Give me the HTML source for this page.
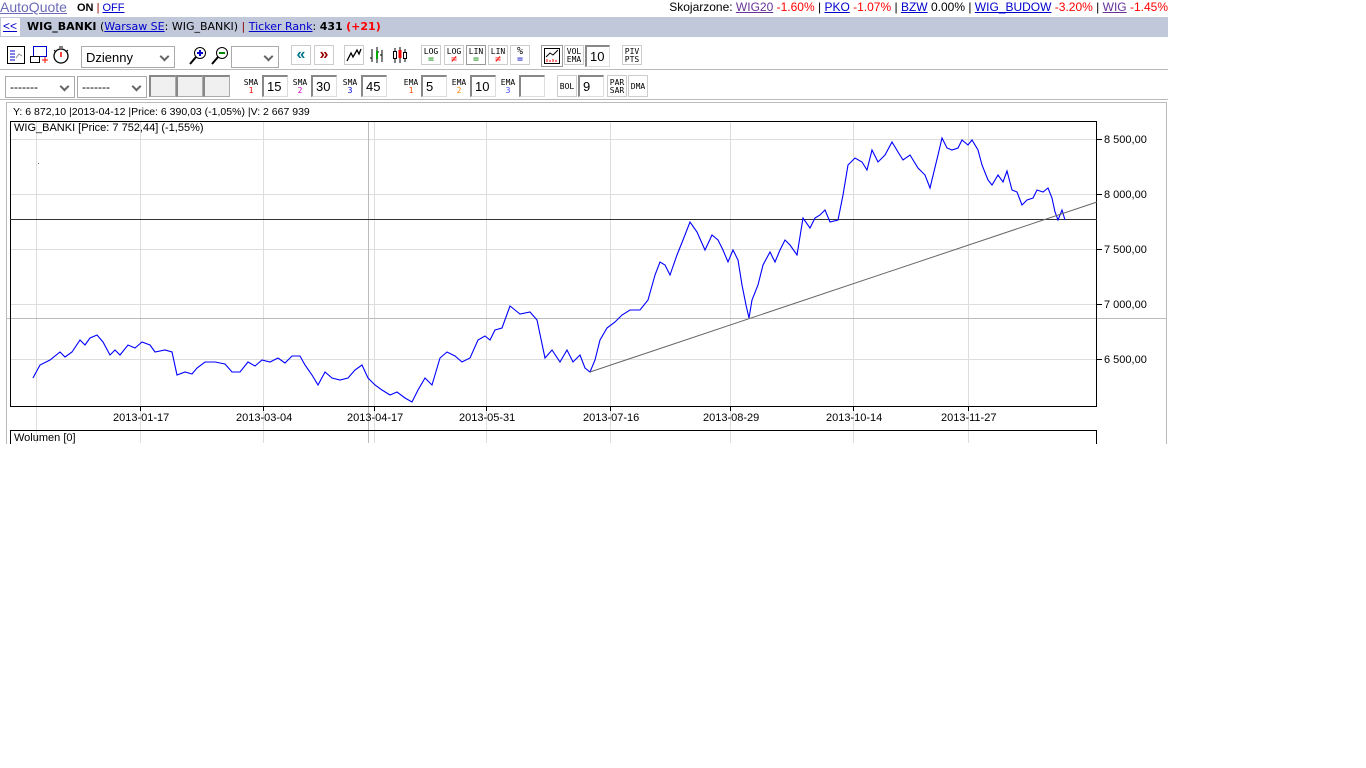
<!DOCTYPE html>
<html><head><meta charset="utf-8">
<style>
*{margin:0;padding:0;box-sizing:border-box}
body{width:1366px;height:768px;background:#fff;font-family:"Liberation Sans",Arial,sans-serif;position:relative;overflow:hidden}
.a{position:absolute}
a{color:#00c;text-decoration:underline}
.btn{position:absolute;border:1px solid #ccc;background:#fff;font-family:"DejaVu Sans Mono","Liberation Mono",monospace;font-size:8px;line-height:8px;text-align:center;color:#000}
.inp{position:absolute;border:1px solid #999;border-right-color:#ddd;border-bottom-color:#ddd;background:#fff;font-size:13px;padding:2px 0 0 3px;height:22px;border-top:2px solid #888;border-left:2px solid #888}
.sel{position:absolute;border:1px solid #aaa;background:#fff;height:22px;font-size:12px;padding:3px 4px}
.sel:after{content:"";position:absolute;right:6px;top:6px;width:5px;height:5px;border-right:2px solid #666;border-bottom:2px solid #666;transform:rotate(45deg)}
.gr{position:absolute;background:#f0f0f0;border:1px solid #aaa;border-top:2px solid #888;border-left:2px solid #888;height:22px;width:27px}
.ax{position:absolute;font-size:11px;color:#000}
</style></head><body>
<div class="a" style="left:0;top:-1px;font-size:14px;color:#6b6bb8;text-decoration:underline">AutoQuote</div>
<div class="a" style="left:77px;top:2px;font-size:11px;font-weight:bold">ON <span style="font-weight:normal;color:#800">|</span> <a style="font-weight:normal">OFF</a></div>
<div class="a" style="right:198px;top:0;font-size:12px;white-space:nowrap">Skojarzone: <a style="color:#639">WIG20</a> <span style="color:red">-1.60%</span> | <a>PKO</a> <span style="color:red">-1.07%</span> | <a>BZW</a> 0.00% | <a>WIG_BUDOW</a> <span style="color:red">-3.20%</span> | <a style="color:#639">WIG</a> <span style="color:red">-1.45%</span></div>
<div class="a" style="left:0;top:17px;width:1168px;height:20px;background:#c0c8da"></div>
<div class="a" style="left:1px;top:18px;width:19px;height:18px;background:#fff;font-size:12px;padding:1px 0 0 2px"><a>&lt;&lt;</a></div>
<div class="a" style="left:27px;top:20px;font-size:11px;font-family:'DejaVu Sans',sans-serif;white-space:nowrap"><b>WIG_BANKI</b> (<a>Warsaw SE</a>: WIG_BANKI) <span style="color:#800">|</span> <a>Ticker Rank</a>: <b>431</b> <b style="color:red">(+21)</b></div>

<svg class="a" style="left:7px;top:46px" width="18" height="18"><rect x=".5" y=".5" width="17" height="17" fill="#fff" stroke="#000"/><g stroke="#00c"><line x1="3" y1="5" x2="8" y2="5"/><line x1="3" y1="8" x2="8" y2="8"/><line x1="3" y1="11" x2="8" y2="11"/><line x1="3" y1="14" x2="8" y2="14"/></g><polyline points="9,12 12,8 15,10" fill="none" stroke="#888"/></svg>
<svg class="a" style="left:29px;top:45px" width="20" height="20"><rect x="4.5" y="1.5" width="13" height="10" fill="#fff" stroke="#00c"/><rect x="1.5" y="11.5" width="9" height="6" fill="#fff" stroke="#000"/><path d="M13 15h6M16 12v6" stroke="red"/></svg>
<svg class="a" style="left:51px;top:45px" width="20" height="20"><circle cx="10" cy="11" r="7" fill="#fff" stroke="#000" stroke-width="1.3"/><path d="M10 7v5" stroke="red" stroke-width="1.5"/><path d="M8 2h4M3 5l2 2M17 5l-2 2" stroke="#000"/></svg>
<div class="sel" style="left:81px;top:46px;width:94px;font-size:13px">Dzienny</div>
<svg class="a" style="left:188px;top:46px" width="20" height="20"><circle cx="12" cy="7" r="5.5" fill="#fff" stroke="#000"/><path d="M9 7h6M12 4v6" stroke="#00c" stroke-width="2"/><path d="M8 11l-6 7" stroke="#000" stroke-width="2"/></svg>
<svg class="a" style="left:210px;top:46px" width="20" height="20"><circle cx="12" cy="7" r="5.5" fill="#fff" stroke="#000"/><path d="M9 7h6" stroke="#080" stroke-width="2"/><path d="M8 11l-6 7" stroke="#000" stroke-width="2"/></svg>
<div class="sel" style="left:231px;top:46px;width:48px"></div>
<div class="a" style="left:291px;top:45px;width:20px;height:20px;border:1px solid #ccc;color:#078;font-weight:bold;font-size:16px;text-align:center;line-height:18px">«</div>
<div class="a" style="left:314px;top:45px;width:20px;height:20px;border:1px solid #ccc;color:#900;font-weight:bold;font-size:16px;text-align:center;line-height:18px">»</div>
<svg class="a" style="left:344px;top:45px" width="20" height="20"><rect x=".5" y=".5" width="19" height="19" fill="#fff" stroke="#ccc"/><polyline points="3,16 7,8 9,12 13,5 15,9 17,4" fill="none" stroke="#000" stroke-width="1.3"/></svg>
<svg class="a" style="left:367px;top:45px" width="20" height="20"><path d="M5 4v13M10 2v16M15 5v12M3 13h2M10 7h2M13 10h2" stroke="#000"/><rect x="9" y="6" width="2" height="8" fill="#0a0"/></svg>
<svg class="a" style="left:390px;top:45px" width="20" height="20"><path d="M5 3v15M10 2v16M15 4v13" stroke="#000"/><rect x="3.5" y="6.5" width="3" height="7" fill="#fff" stroke="#000"/><rect x="8.5" y="5" width="3" height="8" fill="red"/><rect x="13.5" y="7.5" width="3" height="6" fill="#fff" stroke="#000"/></svg>
<div class="btn" style="left:421px;top:45px;width:20px;height:20px;padding-top:2px">LOG<br><span style="color:#080;font-size:10px">=</span></div>
<div class="btn" style="left:444px;top:45px;width:20px;height:20px;padding-top:2px">LOG<br><span style="color:red;font-size:10px">≠</span></div>
<div class="btn" style="left:466px;top:45px;width:20px;height:20px;padding-top:2px;border-color:#999">LIN<br><span style="color:#080;font-size:10px">=</span></div>
<div class="btn" style="left:488px;top:45px;width:20px;height:20px;padding-top:2px">LIN<br><span style="color:red;font-size:10px">≠</span></div>
<div class="btn" style="left:510px;top:45px;width:20px;height:20px;padding-top:2px;font-size:10px">%<br><span style="color:#00c;font-size:10px">=</span></div>
<svg class="a" style="left:541px;top:45px" width="22" height="22"><rect x=".5" y=".5" width="21" height="21" fill="#fff" stroke="#999"/><rect x="3.5" y="3.5" width="15" height="15" fill="#fff" stroke="#000"/><polyline points="5,12 9,8 12,10 17,5" fill="none" stroke="#000"/><path d="M6 17v-3M9 17v-2M12 17v-3M15 17v-2" stroke="red"/></svg>
<div class="btn" style="left:564px;top:45px;width:20px;height:20px;padding-top:2px">VOL<br>EMA</div>
<div class="inp" style="left:585px;top:45px;width:25px">10</div>
<div class="btn" style="left:622px;top:45px;width:20px;height:20px;padding-top:2px">PIV<br>PTS</div>
<div class="a" style="left:0;top:69px;width:1168px;height:1px;background:#bbb"></div>

<div class="sel" style="left:5px;top:76px;width:70px">-------</div>
<div class="sel" style="left:77px;top:76px;width:70px">-------</div>
<div class="gr" style="left:149px;top:75px"></div>
<div class="gr" style="left:176px;top:75px"></div>
<div class="gr" style="left:203px;top:75px"></div>
<div class="btn" style="left:241px;top:75px;width:20px;height:22px;padding-top:3px;border-color:#fff">SMA<br><span style="color:red">1</span></div>
<div class="inp" style="left:262px;top:75px;width:26px">15</div>
<div class="btn" style="left:290px;top:75px;width:20px;height:22px;padding-top:3px;border-color:#fff">SMA<br><span style="color:#c0c">2</span></div>
<div class="inp" style="left:311px;top:75px;width:26px">30</div>
<div class="btn" style="left:340px;top:75px;width:20px;height:22px;padding-top:3px;border-color:#fff">SMA<br><span style="color:#00c">3</span></div>
<div class="inp" style="left:361px;top:75px;width:26px">45</div>
<div class="btn" style="left:401px;top:75px;width:20px;height:22px;padding-top:3px;border-color:#fff">EMA<br><span style="color:#f40">1</span></div>
<div class="inp" style="left:421px;top:75px;width:26px">5</div>
<div class="btn" style="left:449px;top:75px;width:20px;height:22px;padding-top:3px;border-color:#fff">EMA<br><span style="color:#f80">2</span></div>
<div class="inp" style="left:470px;top:75px;width:26px">10</div>
<div class="btn" style="left:498px;top:75px;width:20px;height:22px;padding-top:3px;border-color:#fff">EMA<br><span style="color:#44f">3</span></div>
<div class="inp" style="left:519px;top:75px;width:26px"></div>
<div class="btn" style="left:557px;top:75px;width:20px;height:22px;padding-top:7px">BOL</div>
<div class="inp" style="left:578px;top:75px;width:26px">9</div>
<div class="btn" style="left:607px;top:75px;width:20px;height:22px;padding-top:3px">PAR<br>SAR</div>
<div class="btn" style="left:628px;top:75px;width:20px;height:22px;padding-top:7px">DMA</div>
<div class="a" style="left:0;top:99px;width:1168px;height:1px;background:#bbb"></div>

<div class="a" style="left:6px;top:102px;width:1161px;height:1px;background:#bbb"></div>
<div class="a" style="left:6px;top:102px;width:1px;height:342px;background:#bbb"></div>
<div class="a" style="left:1166px;top:102px;width:1px;height:342px;background:#bbb"></div>
<div class="a" style="left:13px;top:106px;font-size:10.5px">Y: 6 872,10 |2013-04-12 |Price: 6 390,03 (-1,05%) |V: 2 667 939</div>
<svg class="a" style="left:0;top:0" width="1366" height="450">
<g stroke="#ddd" stroke-width="1">
<line x1="36.5" y1="121" x2="36.5" y2="443"/><line x1="140.5" y1="121" x2="140.5" y2="443"/><line x1="263.5" y1="121" x2="263.5" y2="443"/><line x1="374.5" y1="121" x2="374.5" y2="443"/><line x1="486.5" y1="121" x2="486.5" y2="443"/><line x1="610.5" y1="121" x2="610.5" y2="443"/><line x1="730.5" y1="121" x2="730.5" y2="443"/><line x1="853.5" y1="121" x2="853.5" y2="443"/><line x1="968.5" y1="121" x2="968.5" y2="443"/>
<line x1="10" y1="139.5" x2="1097" y2="139.5"/><line x1="10" y1="194.5" x2="1097" y2="194.5"/><line x1="10" y1="249.5" x2="1097" y2="249.5"/><line x1="10" y1="304.5" x2="1097" y2="304.5"/><line x1="10" y1="359.5" x2="1097" y2="359.5"/>
</g>
<line x1="368.5" y1="121" x2="368.5" y2="443" stroke="#bbb"/>
<line x1="6" y1="318.5" x2="1166" y2="318.5" stroke="#bbb"/>
<rect x="10.5" y="121.5" width="1086" height="285" fill="none" stroke="#000"/>
<line x1="10" y1="219.5" x2="1097" y2="219.5" stroke="#333"/>
<g stroke="#000"><line x1="1097" y1="139.5" x2="1102" y2="139.5"/><line x1="1097" y1="194.5" x2="1102" y2="194.5"/><line x1="1097" y1="249.5" x2="1102" y2="249.5"/><line x1="1097" y1="304.5" x2="1102" y2="304.5"/><line x1="1097" y1="359.5" x2="1102" y2="359.5"/>
<line x1="140.5" y1="406" x2="140.5" y2="411"/><line x1="263.5" y1="406" x2="263.5" y2="411"/><line x1="374.5" y1="406" x2="374.5" y2="411"/><line x1="486.5" y1="406" x2="486.5" y2="411"/><line x1="610.5" y1="406" x2="610.5" y2="411"/><line x1="730.5" y1="406" x2="730.5" y2="411"/><line x1="853.5" y1="406" x2="853.5" y2="411"/><line x1="968.5" y1="406" x2="968.5" y2="411"/></g>
<polyline fill="none" stroke="#00f" stroke-width="1.1" points="33,378 40,365 50,360 60,352 65,357 72,352 80,340 85,345 90,338 97,335 103,342 110,355 115,350 120,355 128,345 135,348 142,342 150,345 155,352 165,350 172,352 177,375 185,372 192,374 197,368 205,362 215,362 225,364 232,372 240,372 248,362 255,366 262,360 270,362 278,358 285,363 292,356 300,356 305,365 312,375 318,385 325,372 332,378 340,380 348,378 355,370 362,365 368,378 375,385 382,390 390,395 397,392 405,398 412,402 418,390 425,378 432,385 440,358 447,352 455,356 462,362 470,358 478,340 485,336 490,340 495,330 502,328 510,306 515,310 520,314 530,312 537,320 545,358 552,350 560,362 567,350 573,362 580,355 585,368 590,372 595,360 600,340 607,328 615,322 622,315 630,310 640,310 648,300 655,275 660,262 665,265 670,275 677,255 683,240 690,222 697,232 705,250 712,235 718,240 723,250 728,262 733,250 738,260 742,285 746,305 749,318 752,300 758,285 763,265 770,252 775,262 780,250 785,240 790,245 797,255 803,218 810,228 815,218 820,215 825,210 830,222 838,220 843,195 848,165 855,158 862,162 867,170 872,150 878,162 885,155 892,142 898,152 903,160 910,155 918,168 925,175 930,188 938,155 942,138 947,148 952,150 958,148 962,140 968,145 972,140 978,150 982,165 988,180 992,185 998,175 1003,182 1007,171 1012,190 1017,192 1022,205 1027,200 1033,198 1037,190 1043,192 1048,188 1052,198 1055,212 1058,220 1062,210 1065,220"/>
<line x1="590" y1="372" x2="1097" y2="202" stroke="#666"/>
<rect x="10.5" y="430.5" width="1086" height="30" fill="none" stroke="#000"/>
<rect x="38" y="163" width="1" height="1" fill="#666"/>
</svg>
<div class="a" style="left:14px;top:122px;font-size:11px">WIG_BANKI [Price: 7 752,44] (-1,55%)</div>
<div class="ax" style="left:1104px;top:134px">8 500,00</div>
<div class="ax" style="left:1104px;top:189px">8 000,00</div>
<div class="ax" style="left:1104px;top:244px">7 500,00</div>
<div class="ax" style="left:1104px;top:299px">7 000,00</div>
<div class="ax" style="left:1104px;top:354px">6 500,00</div>
<div class="ax" style="left:113px;top:412px">2013-01-17</div>
<div class="ax" style="left:236px;top:412px">2013-03-04</div>
<div class="ax" style="left:347px;top:412px">2013-04-17</div>
<div class="ax" style="left:459px;top:412px">2013-05-31</div>
<div class="ax" style="left:583px;top:412px">2013-07-16</div>
<div class="ax" style="left:703px;top:412px">2013-08-29</div>
<div class="ax" style="left:826px;top:412px">2013-10-14</div>
<div class="ax" style="left:941px;top:412px">2013-11-27</div>
<div class="a" style="left:14px;top:432px;font-size:11px">Wolumen [0]</div>
<div class="a" style="left:0;top:444px;width:1366px;height:324px;background:#fff"></div>
</body></html>
